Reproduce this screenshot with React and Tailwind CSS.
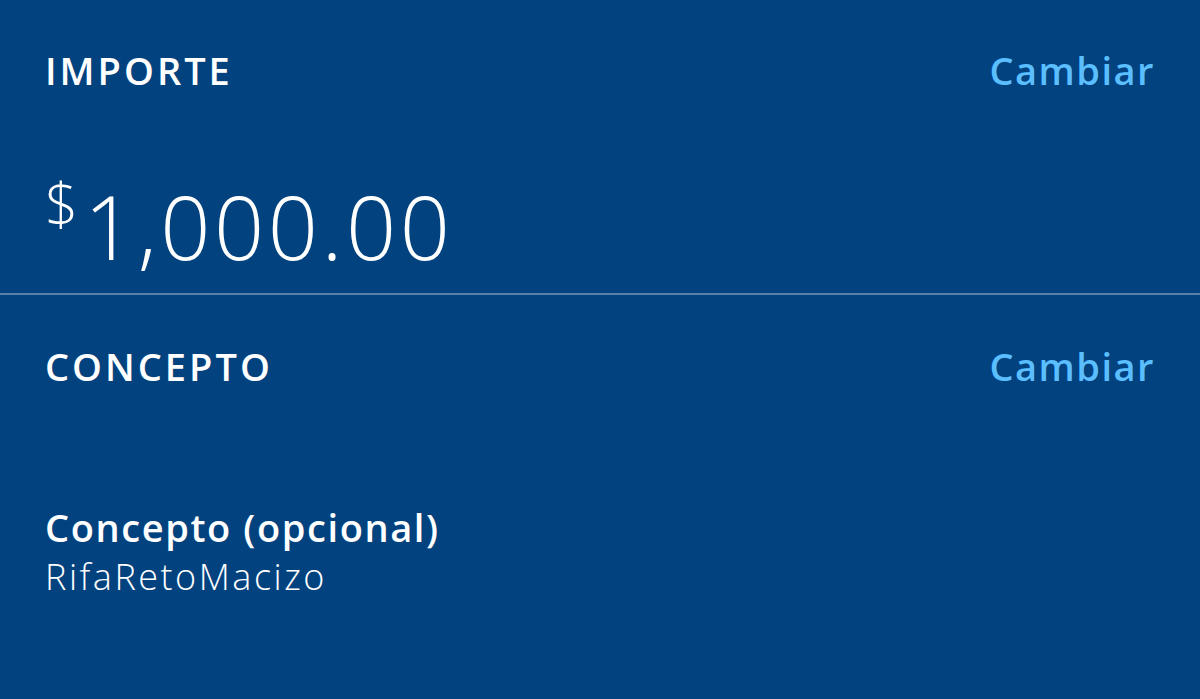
import React from "react";

const SectionHeader = ({ title }) => (
  <div className="flex items-center justify-between">
    <h2 className="text-[38px] leading-none font-semibold tracking-[3px] text-white">{title}</h2>
    <button className="text-[38px] leading-none font-semibold tracking-[1.5px] text-[#5bbeff]">Cambiar</button>
  </div>
);

const App = () => {
  return (
    <div className="min-h-screen w-full bg-[#02437f] font-['Open_Sans',sans-serif] text-white">
      {/* Importe */}
      <div className="px-[45px] pt-[51px] h-[295px] border-b-2 border-[#5a80ab]">
        <SectionHeader title="IMPORTE" />
        <div className="mt-[93px] flex items-start">
          <span className="text-[58px] leading-none font-light mr-[6px] -mt-[8px]">$</span>
          <span className="text-[88px] leading-none font-light tracking-[3.5px]">1,000.00</span>
        </div>
      </div>

      {/* Concepto */}
      <div className="px-[45px] pt-[52px]">
        <SectionHeader title="CONCEPTO" />
        <div className="mt-[123px]">
          <p className="text-[38px] leading-none font-semibold tracking-[1.6px]">Concepto (opcional)</p>
          <p className="mt-[13px] text-[36px] leading-none font-light tracking-[2.5px]">RifaRetoMacizo</p>
        </div>
      </div>
    </div>
  );
};

export default App;
